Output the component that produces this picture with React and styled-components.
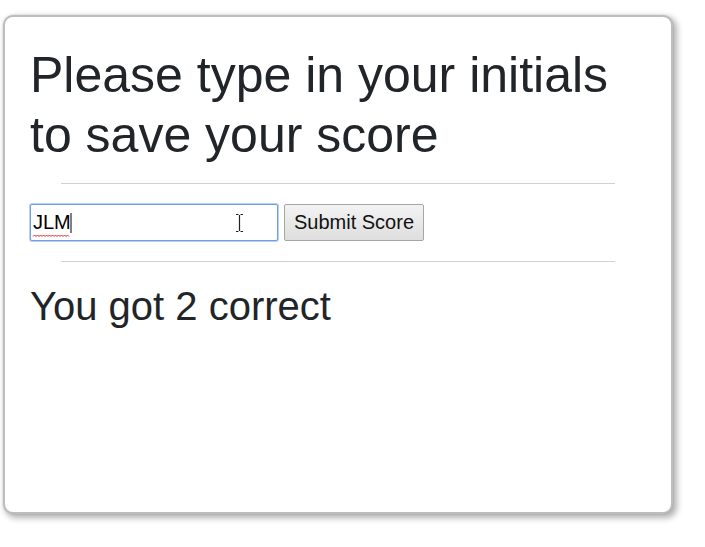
import React from "react";
import styled, { createGlobalStyle } from "styled-components";

const GlobalStyle = createGlobalStyle`
  body {
    margin: 0;
    background: #ffffff;
    font-family: "Liberation Sans", Arial, sans-serif;
    color: #212529;
  }
`;

const Card = styled.div`
  box-sizing: border-box;
  position: relative;
  width: 670px;
  height: 499px;
  margin: 15px 0 20px 3px;
  padding: 28px 25px 0 25px;
  background: #ffffff;
  border: 2px solid #bdbdbd;
  border-radius: 10px;
  box-shadow: 0 0 2px rgba(0, 0, 0, 0.15), 3px 3px 6px 1px rgba(0, 0, 0, 0.3);
`;

const Title = styled.h1`
  margin: 0;
  font-size: 50px;
  line-height: 60px;
  font-weight: 400;
  color: #212529;
`;

const Rule = styled.hr`
  width: 90%;
  margin: ${({ $top }) => $top}px auto 0;
  border: 0;
  border-top: 1px solid #d0d0d0;
  height: 0;
`;

const Form = styled.form`
  display: flex;
  align-items: center;
  gap: 6px;
  margin-top: 20px;
  height: 37px;
`;

const Field = styled.div`
  position: relative;
  width: 248px;
  height: 37px;
`;

const Input = styled.input`
  box-sizing: border-box;
  width: 100%;
  height: 100%;
  padding: 0 2px;
  border: 1px solid #6f9ee4;
  border-radius: 2px;
  box-shadow: 0 0 0 1px #b9d0f2;
  outline: none;
  font-family: "Liberation Sans", Arial, sans-serif;
  font-size: 20px;
  color: #000;
  caret-color: transparent;
`;

const Marks = styled.svg`
  position: absolute;
  left: 0;
  top: 0;
  pointer-events: none;
`;

const Button = styled.button`
  box-sizing: border-box;
  width: 140px;
  height: 37px;
  padding: 0;
  border: 1px solid #a6a6a6;
  border-radius: 2px;
  background: linear-gradient(#f3f3f3, #dedede);
  font-family: "Liberation Sans", Arial, sans-serif;
  font-size: 20px;
  color: #111;
`;

const Score = styled.h2`
  margin: 20px 0 0;
  font-size: 40px;
  line-height: 48px;
  font-weight: 400;
  color: #212529;
`;

export default function App() {
  return (
    <>
      <GlobalStyle />
      <Card>
        <Title>Please type in your initials to save your score</Title>
        <Rule $top={18} />
        <Form onSubmit={(e) => e.preventDefault()}>
          <Field>
            <Input defaultValue="JLM" spellCheck={false} />
            <Marks width="248" height="37" viewBox="0 0 248 37">
              {/* spellcheck squiggle */}
              <path
                d="M3 32.5l1.5-1.5 1.5 1.5 1.5-1.5 1.5 1.5 1.5-1.5 1.5 1.5 1.5-1.5 1.5 1.5 1.5-1.5 1.5 1.5 1.5-1.5 1.5 1.5 1.5-1.5 1.5 1.5 1.5-1.5 1.5 1.5 1.5-1.5 1.5 1.5 1.5-1.5 1.5 1.5 1.5-1.5 1.5 1.5 1.5-1.5 1.5 1.5"
                stroke="#e22222"
                strokeWidth="1"
                fill="none"
              />
              {/* text caret */}
              <path d="M41 9v20" stroke="#000" strokeWidth="1" />
              {/* mouse I-beam */}
              <path
                d="M206 10.5h2.5M210.5 10.5H213M209.5 11v16M206 27.5h2.5M210.5 27.5H213"
                stroke="#222"
                strokeWidth="1.2"
                fill="none"
              />
            </Marks>
          </Field>
          <Button type="submit">Submit Score</Button>
        </Form>
        <Rule $top={20} />
        <Score>You got 2 correct</Score>
      </Card>
    </>
  );
}
